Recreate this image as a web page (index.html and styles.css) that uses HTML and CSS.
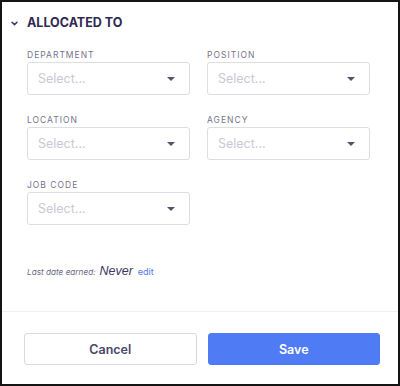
FILE: index.html
```html
<!DOCTYPE html>
<html>
<head>
<meta charset="utf-8">
<link rel="stylesheet" href="styles.css">
</head>
<body>
<div class="panel">
  <div class="content">
    <div class="header">
      <svg class="chev" width="7" height="5" viewBox="0 0 7 5"><path d="M1 1.2 L3.5 3.6 L6 1.2" fill="none" stroke="#3a3866" stroke-width="1.5" stroke-linecap="round" stroke-linejoin="round"/></svg>
      <span class="title">ALLOCATED TO</span>
    </div>
    <div class="grid">
      <div class="field">
        <div class="label">DEPARTMENT</div>
        <div class="select"><span class="ph">Select...</span><span class="caret"></span></div>
      </div>
      <div class="field">
        <div class="label">POSITION</div>
        <div class="select"><span class="ph">Select...</span><span class="caret"></span></div>
      </div>
      <div class="field">
        <div class="label">LOCATION</div>
        <div class="select"><span class="ph">Select...</span><span class="caret"></span></div>
      </div>
      <div class="field">
        <div class="label">AGENCY</div>
        <div class="select"><span class="ph">Select...</span><span class="caret"></span></div>
      </div>
      <div class="field">
        <div class="label">JOB CODE</div>
        <div class="select"><span class="ph">Select...</span><span class="caret"></span></div>
      </div>
    </div>
    <div class="earned">
      <span class="earned-label">Last date earned:</span>
      <span class="never">Never</span>
      <span class="edit">edit</span>
    </div>
  </div>
  <div class="footer">
    <button class="btn cancel">Cancel</button>
    <button class="btn save">Save</button>
  </div>
</div>
</body>
</html>
```

FILE: styles.css
```css
html, body {
  margin: 0;
  padding: 0;
  background: #fff;
}
body {
  font-family: Inter, "Noto Sans", sans-serif;
}
.panel {
  box-sizing: border-box;
  width: 400px;
  height: 386px;
  border: 2px solid #141414;
  display: flex;
  flex-direction: column;
  background: #fff;
}
.content {
  flex: 1;
  padding: 13px 0 0 25px;
}
.header {
  display: flex;
  align-items: center;
  height: 16px;
  margin-left: -16px;
}
.chev {
  width: 7px;
  height: 5px;
  margin-right: 9px;
  margin-top: 1px;
}
.title {
  font-size: 12.5px;
  line-height: 16px;
  font-weight: 700;
  color: #2e2a52;
  letter-spacing: 0;
}
.grid {
  margin-top: 19px;
  display: grid;
  grid-template-columns: 163px 163px;
  column-gap: 17px;
  row-gap: 20px;
}
.label {
  font-size: 8.5px;
  line-height: 10px;
  letter-spacing: 1px;
  color: #75738a;
  font-weight: 400;
  margin-bottom: 2px;
}
.select {
  box-sizing: border-box;
  height: 33px;
  border: 1px solid #dedde5;
  border-radius: 3px;
  display: flex;
  align-items: center;
  justify-content: space-between;
  padding: 0 14px 0 10px;
}
.ph {
  font-size: 12.5px;
  color: #cac9d4;
}
.caret {
  width: 0;
  height: 0;
  border-left: 4px solid transparent;
  border-right: 4px solid transparent;
  border-top: 4px solid #55536b;
  margin-top: 1px;
}
.earned {
  margin-top: 38px;
  display: flex;
  align-items: baseline;
  line-height: 16px;
}
.earned-label {
  font-size: 8.2px;
  font-style: italic;
  color: #6d6b80;
  margin-right: 4px;
}
.never {
  font-family: "Liberation Sans", Arial, sans-serif;
  font-size: 12.5px;
  font-style: italic;
  color: #3a365e;
  margin-right: 5px;
}
.edit {
  font-size: 9px;
  color: #4a78f0;
}
.footer {
  border-top: 1px solid #efeff2;
  padding: 21px 18px 19px 22px;
  display: flex;
  gap: 11px;
}
.btn {
  flex: 1;
  height: 32px;
  border-radius: 3px;
  font-family: Inter, "Noto Sans", sans-serif;
  font-size: 12.5px;
  font-weight: 600;
  cursor: pointer;
}
.cancel {
  background: #fff;
  border: 1px solid #d9d8e0;
  color: #4a4768;
}
.save {
  background: #4f7bf5;
  border: 1px solid #4f7bf5;
  color: #fff;
}
```
